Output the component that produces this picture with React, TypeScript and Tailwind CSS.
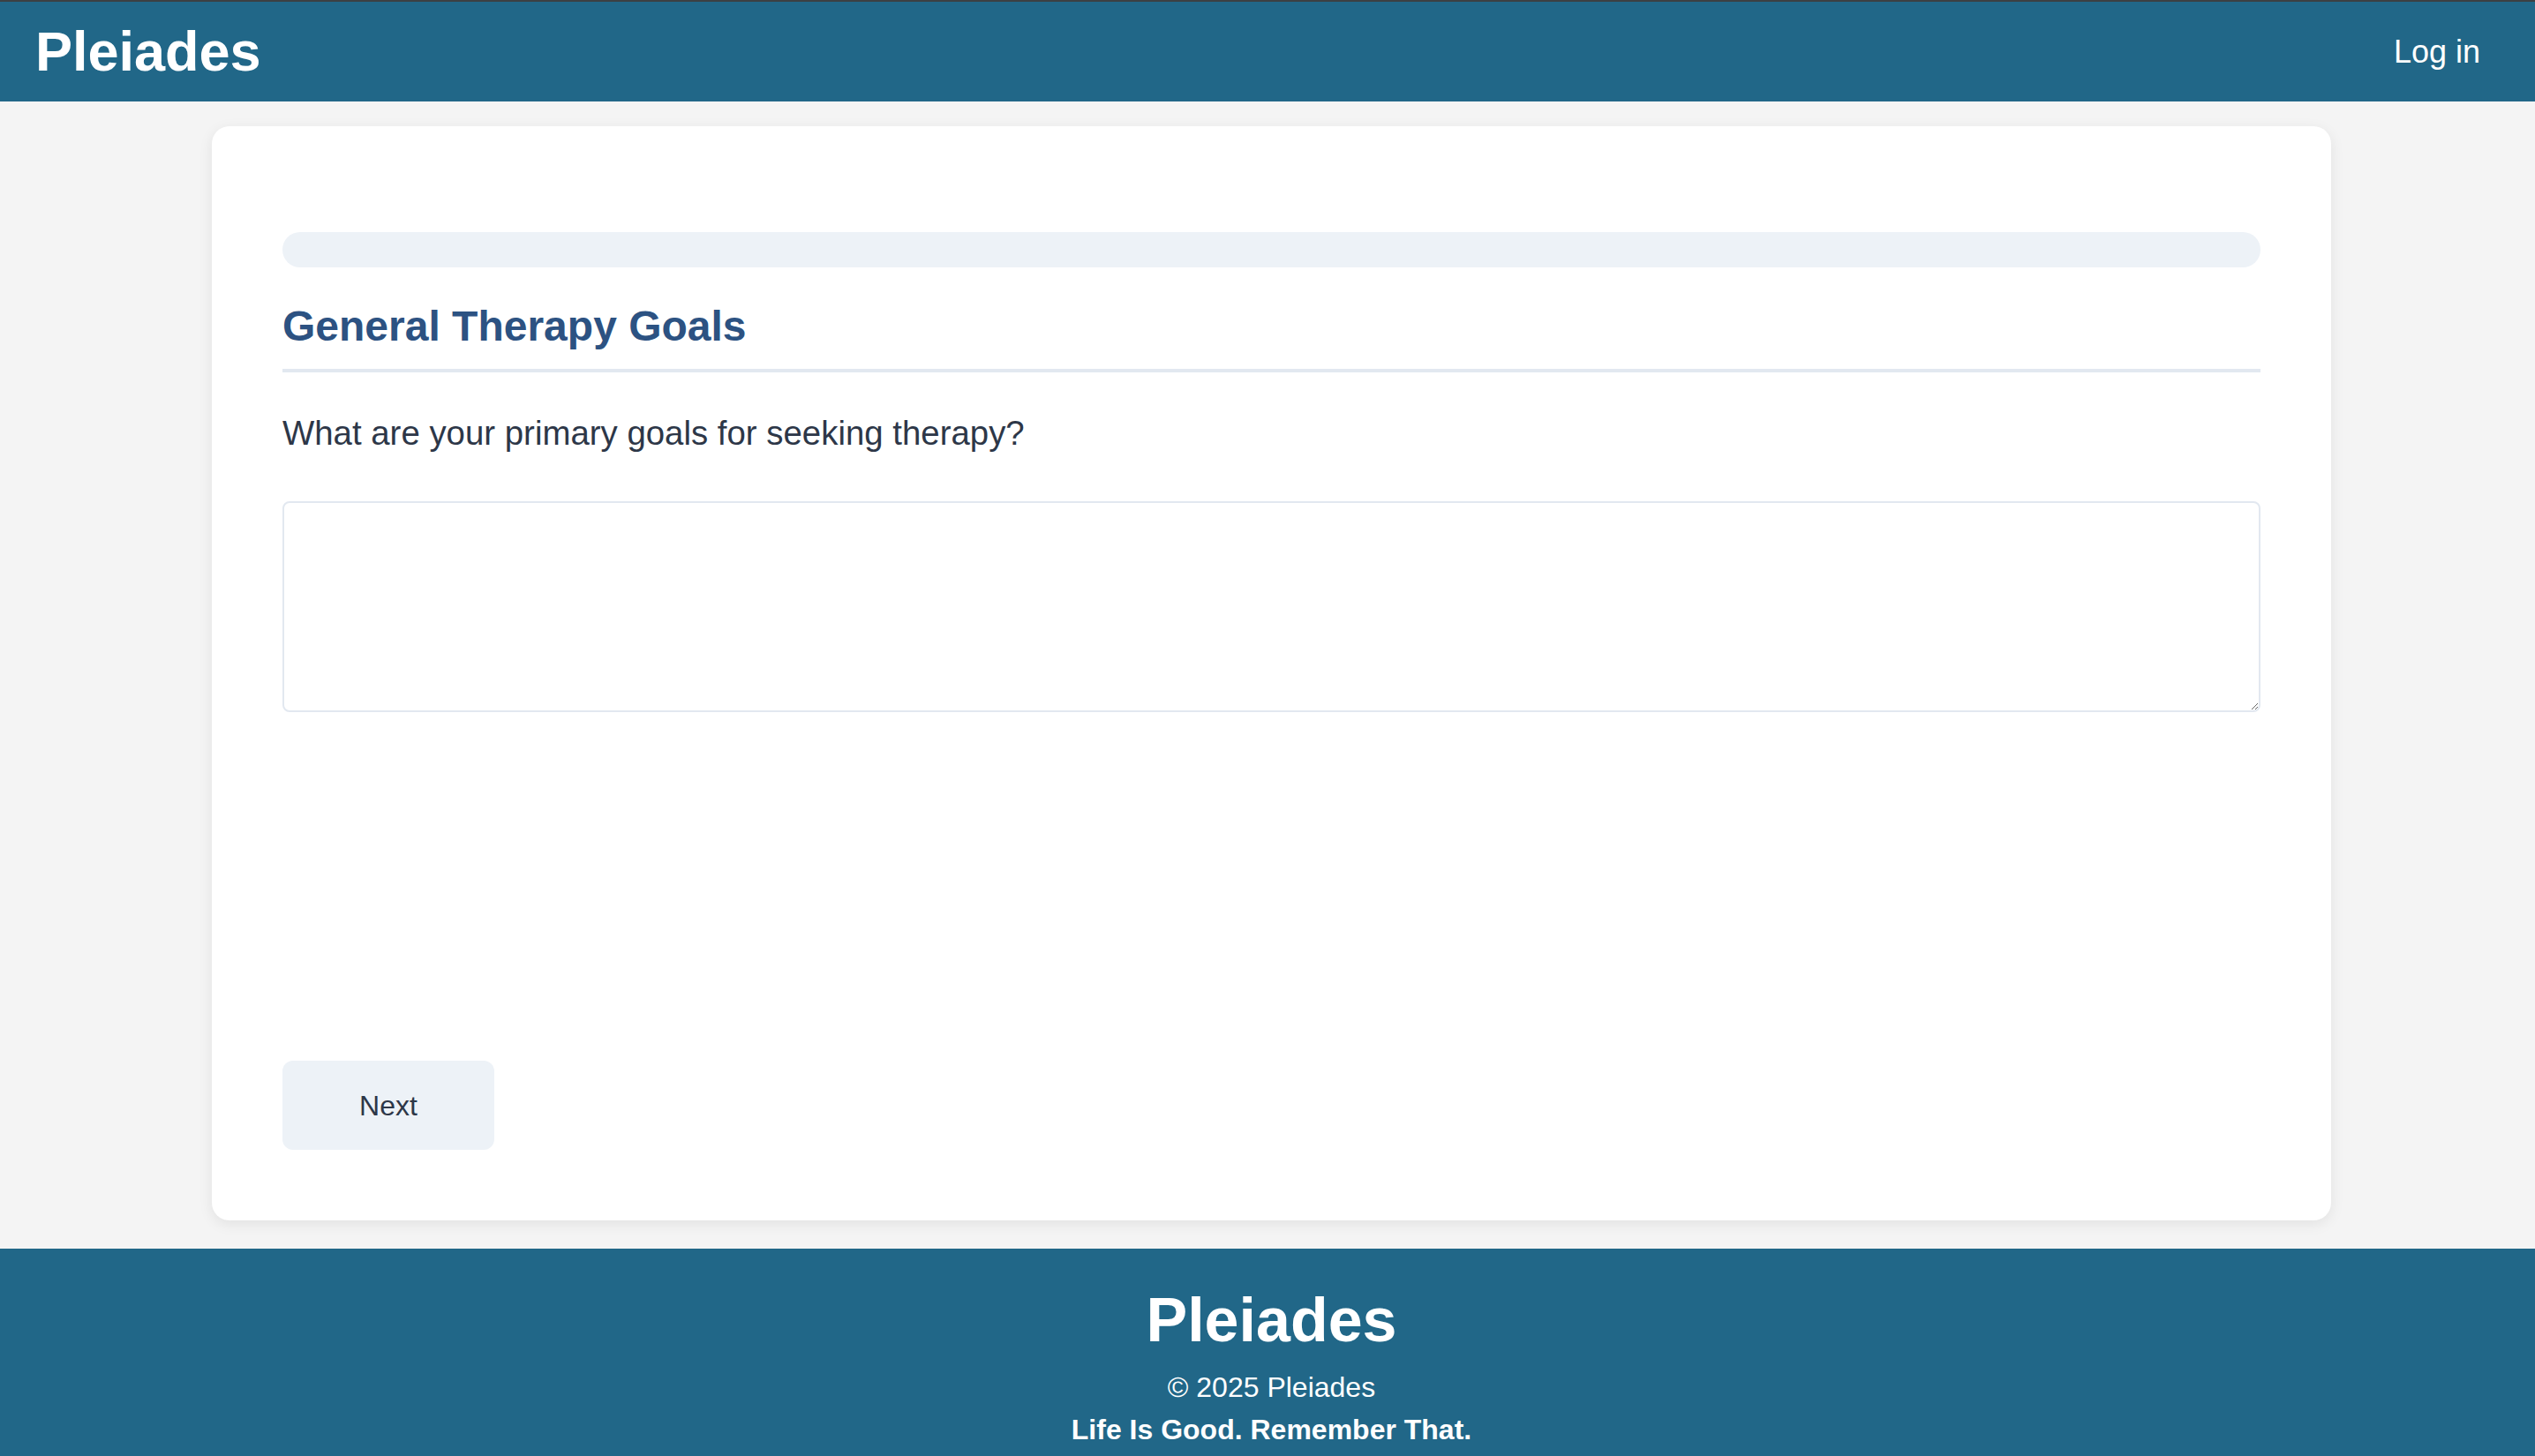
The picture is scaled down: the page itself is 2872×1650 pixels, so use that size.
export default function App() {
  return (
    <div className="min-h-screen flex flex-col bg-[#f4f4f4] text-[#2d3748] font-['Liberation_Sans',Arial,sans-serif]">
      {/* Header */}
      <header className="h-[115px] border-t-2 border-[#3c4043] bg-[#216788] flex items-center justify-between pl-[40px] pr-[62px]">
        <div className="text-[63px] font-bold leading-none text-white">Pleiades</div>
        <a href="#" className="text-[36px] leading-none text-white">Log in</a>
      </header>

      {/* Questionnaire */}
      <main className="pt-[28px] pb-[32px] pl-[240px] pr-[231px]">
        <div className="bg-white rounded-[20px] shadow-[0_4px_16px_rgba(0,0,0,0.08)] px-[80px] pt-[120px] pb-[80px]">
          <div className="h-[40px] rounded-full bg-[#edf2f7]"></div>

          <h2 className="mt-[38px] text-[48px] font-bold leading-[1.2] text-[#2c5282] pb-[19px] border-b-[4px] border-[#e2e8f0]">
            General Therapy Goals
          </h2>

          <p className="mt-[40px] text-[38.4px] leading-[1.5]">What are your primary goals for seeking therapy?</p>

          <textarea className="mt-[49px] block w-full h-[239px] border-2 border-[#e2e8f0] rounded-[8px] p-4 text-[32px] outline-none"></textarea>

          <button className="mt-[395px] w-[240px] h-[101px] rounded-[12px] bg-[#edf2f7] text-[32px] text-[#2d3748]">
            Next
          </button>
        </div>
      </main>

      {/* Footer */}
      <footer className="flex-1 bg-[#216788] text-white text-center pt-[39px] pb-[20px] pl-[9px]">
        <div className="text-[70px] font-bold leading-[1.2]">Pleiades</div>
        <p className="mt-[10px] text-[32px] leading-[1.5]">© 2025 Pleiades</p>
        <p className="text-[32px] font-bold leading-[1.5]">Life Is Good. Remember That.</p>
      </footer>
    </div>
  );
}
